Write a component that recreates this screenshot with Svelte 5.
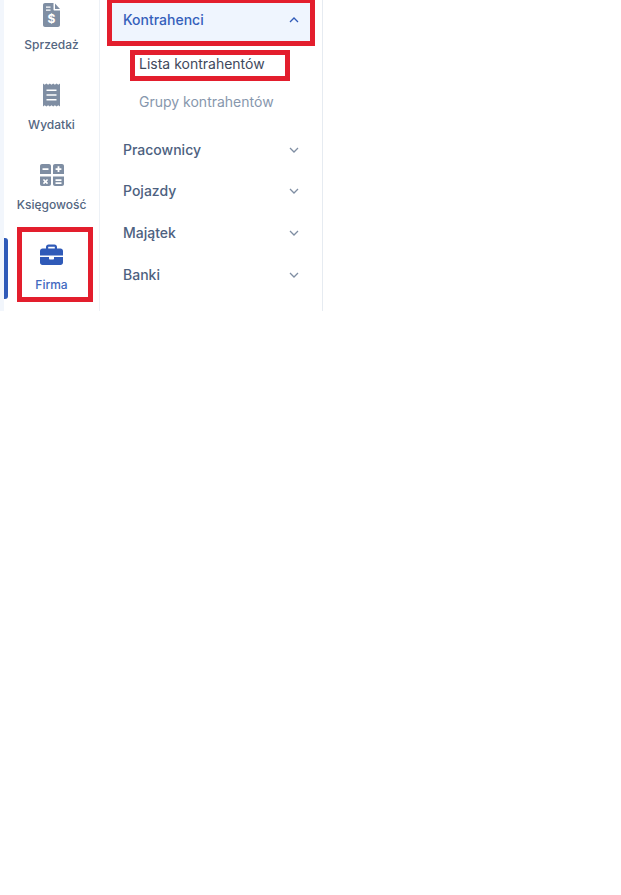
<script>
	const rail = [
		{ label: 'Sprzedaż', icon: 'doc' },
		{ label: 'Wydatki', icon: 'receipt' },
		{ label: 'Księgowość', icon: 'calc' },
		{ label: 'Firma', icon: 'case', active: true }
	];
	const groups = ['Pracownicy', 'Pojazdy', 'Majątek', 'Banki'];
</script>

<div class="shell">
	<nav class="rail">
		<div class="rail-list">
			{#each rail as item}
				<div class="rail-item" class:active={item.active}>
					<svg class="ico" viewBox="0 0 24 24" fill="currentColor">
						{#if item.icon === 'doc'}
							<path fill-rule="evenodd" d="M5 0h8.500v6.500c0 .6.4 1 1 1h5.500v14.500c0 1.100-.9 2-2 2H5c-1.100 0-2-.9-2-2V2c0-1.100.9-2 2-2zM6 3.500v1.300h4.500V3.500zM6 6.500v1.300h4.500V6.500z"/>
							<path d="M15 0.500l5 5.500h-5z"/>
							<text class="dollar" x="11.500" y="20" text-anchor="middle">$</text>
						{:else if item.icon === 'receipt'}
							<path fill-rule="evenodd" d="M3 .5l1.700 1.200L6.400 .5l1.700 1.200L9.800 .5l1.700 1.200L13.200 .5l1.700 1.200L16.600 .5l1.700 1.200L20 .5v23l-1.700-1.200-1.700 1.200-1.700-1.200-1.700 1.200-1.700-1.200-1.700 1.200-1.700-1.200-1.700 1.200-1.700-1.200L3 23.500zM6.500 6.500v1.500h10V6.500zM6.500 11.200v1.500h10v-1.500zM6.500 16v1.500h10V16z"/>
						{:else if item.icon === 'calc'}
							<path fill-rule="evenodd" d="M2 1h7c1.100 0 2 .9 2 2v8H0V3c0-1.100.9-2 2-2zM2.500 5.200v1.700h6V5.200z"/>
							<path fill-rule="evenodd" d="M15 1h7c1.100 0 2 .9 2 2v8H13V3c0-1.100.9-2 2-2zM17.600 5.200v-2h1.800v2h2v1.700h-2v2h-1.800v-2h-2V5.200z"/>
							<path fill-rule="evenodd" d="M0 13.500h11V21c0 1.100-.9 2-2 2H2c-1.100 0-2-.9-2-2zM4 16l-1.100 1.100 1.500 1.500-1.500 1.500L4 21.200l1.500-1.500L7 21.200l1.100-1.100-1.500-1.500 1.500-1.500L7 16l-1.500 1.500z"/>
							<path fill-rule="evenodd" d="M13 13.500h11V21c0 1.100-.9 2-2 2h-7c-1.100 0-2-.9-2-2zM15.500 16.200v1.700h6v-1.700zM15.500 19.200v1.700h6v-1.700z"/>
						{:else}
							<path fill-rule="evenodd" d="M8.500 1.500h6c1.400 0 2.500 1.100 2.500 2.500v1.500h3.500c1.400 0 2.500 1.100 2.500 2.500v4.500H0V8C0 6.600 1.100 5.500 2.500 5.500H6V4c0-1.400 1.100-2.500 2.500-2.500zM8.500 3.700c-.2 0-.3.100-.3.300v1.500h6.600V4c0-.2-.1-.3-.3-.3z"/>
							<path d="M0 14h9v1.500c0 .6.400 1 1 1h3c.6 0 1-.4 1-1V14h9v5.500c0 1.400-1.100 2.500-2.500 2.500h-18C1.100 22 0 20.900 0 19.500z"/>
						{/if}
					</svg>
					<span>{item.label}</span>
				</div>
			{/each}
		</div>
	</nav>

	<aside class="menu">
		<div class="group open">
			<span>Kontrahenci</span>
			<svg viewBox="0 0 10 6" class="chev"><path d="M1 5l4-4 4 4"/></svg>
		</div>
		<div class="sub current">Lista kontrahentów</div>
		<div class="sub">Grupy kontrahentów</div>
		{#each groups as g}
			<div class="group">
				<span>{g}</span>
				<svg viewBox="0 0 10 6" class="chev"><path d="M1 1l4 4 4-4"/></svg>
			</div>
		{/each}
	</aside>

	<div class="mark m1"></div>
	<div class="mark m2"></div>
	<div class="mark m3"></div>
</div>

<style>
:global(body) {
	background: #fff;
}
.shell {
	position: relative;
	display: flex;
	width: 323px;
	height: 311px;
	overflow: hidden;
	font-family: Inter, "Liberation Sans", sans-serif;
}
.rail {
	width: 100px;
	box-sizing: border-box;
	border-left: 4px solid #f2f6fc;
	border-right: 1px solid #edf1f6;
	overflow: hidden;
}
.rail-list {
	margin-top: -13px;
}
.rail-item {
	position: relative;
	height: 80px;
	padding-top: 16px;
	box-sizing: border-box;
	display: flex;
	flex-direction: column;
	align-items: center;
	gap: 9px;
	color: #7f8ea3;
}
.rail-item span {
	font-size: 12px;
	font-weight: 500;
	line-height: 17px;
	color: #536681;
}
.rail-item.active {
	color: #2f5ab8;
}
.rail-item.active span {
	color: #4269bf;
}
.rail-item.active::before {
	content: "";
	position: absolute;
	left: 0;
	top: 11px;
	width: 4px;
	height: 61px;
	background: #2f5ab8;
	border-radius: 0 3px 3px 0;
}
.ico {
	width: 24px;
	height: 24px;
	flex: none;
}
.dollar {
	font-size: 12px;
	font-weight: 700;
	fill: #fff;
	font-family: Inter, sans-serif;
}
.menu {
	width: 223px;
	box-sizing: border-box;
	padding: 0 12px 0 11px;
	border-right: 1px solid #e6ebf1;
}
.group {
	height: 41.600px;
	display: flex;
	align-items: center;
	justify-content: space-between;
	padding: 0 11px 0 12px;
	font-size: 14px;
	font-weight: 450;
	color: #4d6180;
}
.group.open {
	height: 44px;
	margin-top: -3px;
	background: #eff5fe;
	color: #3560bb;
}
.sub {
	height: 39px;
	display: flex;
	align-items: center;
	padding-left: 28px;
	font-size: 14px;
	color: #8797ad;
}
.sub.current {
	height: 41px;
	padding-top: 3px;
	box-sizing: border-box;
	color: #3f495c;
}
.sub + .group {
	margin-top: 7.500px;
}
.chev {
	width: 10px;
	height: 6px;
	margin-top: 1px;
	fill: none;
	stroke: #7f8ea3;
	stroke-width: 1.300;
}
.open .chev {
	stroke: #2f5ab8;
}
.mark {
	position: absolute;
	border: 5px solid #e31e2d;
	box-sizing: border-box;
	pointer-events: none;
}
.m1 {
	left: 107px;
	top: -2px;
	width: 208px;
	height: 48px;
}
.m2 {
	left: 130px;
	top: 50px;
	width: 160px;
	height: 31px;
}
.m3 {
	left: 17px;
	top: 227px;
	width: 76px;
	height: 75px;
}
</style>
